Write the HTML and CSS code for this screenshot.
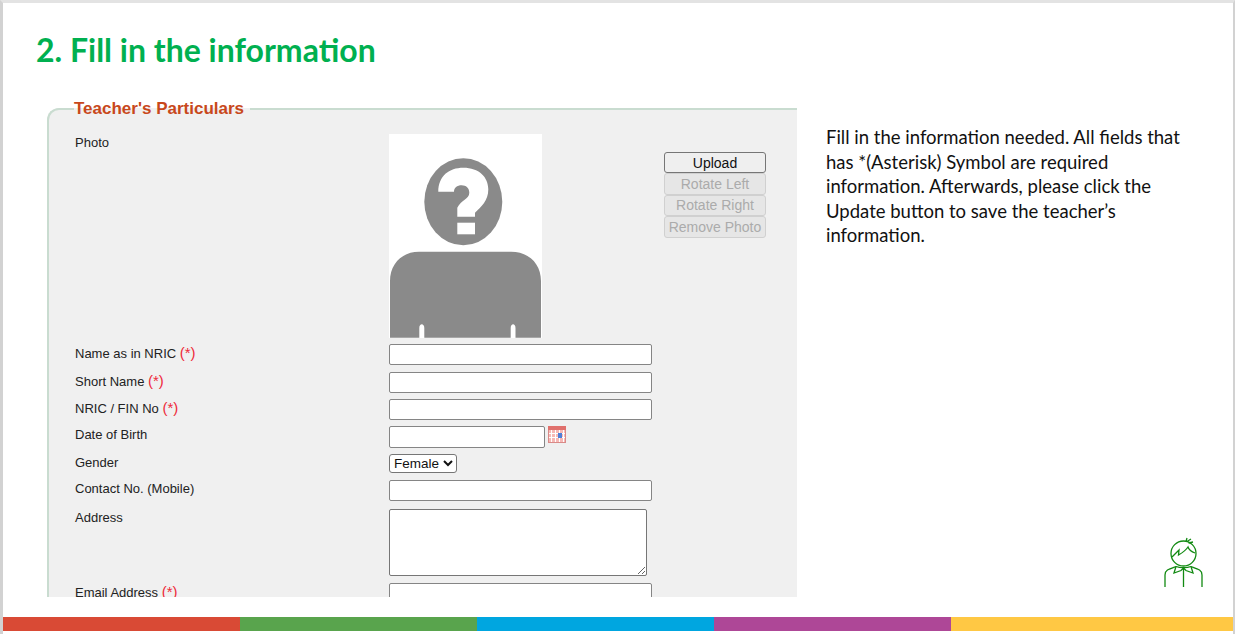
FILE: index.html
```html
<!DOCTYPE html>
<html lang="en">

<head>
  <meta charset="UTF-8">
  <title>2. Fill in the information</title>
  <link rel="stylesheet" href="styles.css">
</head>

<body>
  <div class="slide">
    <h1 class="slide-title">2. Fill in the information</h1>

    <div class="slide-main">
      <!-- Screenshot of the form, cut off at the bottom -->
      <div class="panel">
        <fieldset class="particulars">
          <legend>Teacher's Particulars</legend>
          <form class="form-grid">
            <label>Photo</label>
            <div class="photo-field">
              <svg class="photo" viewBox="0 0 153 204" width="153" height="204">
                <rect width="153" height="204" fill="#fff" />
                <ellipse cx="74.3" cy="67.8" rx="39" ry="43.5" fill="#8a8a8a" />
                <path fill="#fff" d="M49.3 57.7C49.3 42 60 33.7 74.3 33.7C90 33.7 99.3 43 99.3 55.3C99.3 67 92 73 86 78.7V82.7H68.3V73.7C72 66 80.3 65 80.3 58.7C80.3 54 77 51.3 72.7 51.3C68 51.3 65 54 65 57.7Z" />
                <rect x="68.3" y="88.7" width="17.7" height="11.6" fill="#fff" />
                <path fill="#8a8a8a" d="M1 203.7V147C1 130 13 117.7 30 117.7H122C140 117.7 152 130 152 147V203.7H126.500V194C126.500 189 121.700 189 121.700 194V203.700H35.300V194C35.300 189 30.300 189 30.300 194V203.700Z" />
              </svg>
              <div class="photo-buttons">
                <button type="button">Upload</button>
                <button type="button" disabled>Rotate Left</button>
                <button type="button" disabled>Rotate Right</button>
                <button type="button" disabled>Remove Photo</button>
              </div>
            </div>

            <label>Name as in NRIC <span class="req">(*)</span></label>
            <input type="text">

            <label>Short Name <span class="req">(*)</span></label>
            <input type="text">

            <label>NRIC / FIN No <span class="req">(*)</span></label>
            <input type="text">

            <label>Date of Birth</label>
            <div class="date-field">
              <input type="text" class="date-input">
              <svg class="cal-icon" viewBox="0 0 18 17" width="18" height="17">
                <rect x="0.500" y="1.500" width="17" height="15" fill="#f6b9b6" stroke="#d98a88" />
                <rect x="0" y="0" width="18" height="4" fill="#e0706c" />
                <path stroke="#fff" stroke-width="1" d="M3.500 4V16M7.500 4V16M11.500 4V16M15.500 4V16M1 7.500H17M1 11.500H17" />
                <rect x="10" y="7" width="4" height="5" fill="#4f7fd8" />
              </svg>
            </div>

            <label>Gender</label>
            <div><select class="gender">
                <option>Female</option>
                <option>Male</option>
              </select></div>

            <label>Contact No. (Mobile)</label>
            <input type="text">

            <label>Address</label>
            <textarea class="address"></textarea>

            <label>Email Address <span class="req">(*)</span></label>
            <input type="text">
          </form>
        </fieldset>
      </div>

      <div class="side">
        <p class="note">Fill in the information needed. All fields that has *(Asterisk) Symbol are required information. Afterwards, please click the Update button to save the teacher’s information.</p>
        <svg class="mascot" viewBox="0 0 40 50" width="40" height="50" fill="none" stroke="#128a12" stroke-width="1.300">
          <circle cx="19.500" cy="16.500" r="12.500" />
          <path d="M8 20C11 17 13 15 15 13L14.500 18C18 16 22 13 24 10C25 13 28 15 31 16" />
          <path d="M22 4.500L23 1M23 4.500L27 2M24.500 6L29 5" />
          <path d="M1 50V38C1 33 5 32 12 29.500M38 50V38C38 33 34 32 27 29.500" />
          <path d="M12 29.500L10 36L17 33.500L19.500 31L22 33.500L29 36L27 29.500M19.500 31V50M12 29.500C16 31 23 31 27 29.500" />
        </svg>
      </div>
    </div>

    <div class="color-bar">
      <span class="c-red"></span>
      <span class="c-green"></span>
      <span class="c-blue"></span>
      <span class="c-purple"></span>
      <span class="c-yellow"></span>
    </div>
  </div>
</body>

</html>
```

FILE: styles.css
```css
/* General */
* {
  box-sizing: border-box;
}

body {
  margin: 0;
  background-color: #fff;
}

.slide {
  display: flex;
  flex-direction: column;
  height: 634px;
  border-top: 3px solid #e3e3e3;
  border-left: 3px solid #d2d2d2;
  border-right: 2px solid #d2d2d2;
  overflow: hidden;
}

.slide-title {
  margin: 0;
  height: 96px;
  padding: 25px 0 0 33px;
  font-family: "Lato", sans-serif;
  font-size: 32px;
  line-height: 44px;
  font-weight: 700;
  color: #00b050;
}

.slide-main {
  display: flex;
  height: 498px;
}

/* Form panel */
.panel {
  width: 750px;
  height: 498px;
  margin-left: 44px;
  overflow: hidden;
}

.particulars {
  margin: 0;
  padding: 0 0 0 26px;
  width: 770px;
  height: 560px;
  border: 2px solid #c9dcd0;
  border-right: none;
  border-bottom: none;
  border-top-left-radius: 12px;
  background-color: #f0f0f0;
}

.particulars legend {
  padding: 0 6px 0 0;
  margin-left: -1px;
  font-family: "Liberation Sans", Arial, sans-serif;
  font-size: 17px;
  line-height: 20px;
  font-weight: 700;
  color: #c8481b;
}

.form-grid {
  display: grid;
  grid-template-columns: 314px 263px;
  grid-template-rows: 210px 28px 27px 27px 28px 26px 29px 74px 40px;
  margin-top: 15px;
  font-family: "Liberation Sans", Arial, sans-serif;
  font-size: 13px;
  color: #222;
}

.form-grid label {
  line-height: 17px;
}

.req {
  font-size: 15px;
  color: #ee2a3a;
}

.form-grid input {
  display: block;
  width: 263px;
  height: 21px;
  padding: 1px 2px;
  border: 1px solid #858585;
  border-radius: 2px;
  background-color: #fff;
}

.photo-field {
  display: flex;
  align-items: flex-start;
  width: 420px;
}

.photo {
  display: block;
  flex: none;
}

.photo-buttons {
  display: flex;
  flex-direction: column;
  width: 102px;
  margin: 18px 0 0 122px;
}

.photo-buttons button {
  height: 21.400px;
  padding: 0;
  border: 1px solid #767676;
  border-radius: 3px;
  background-color: #efefef;
  font-family: inherit;
  font-size: 14px;
  color: #111;
}

.photo-buttons button:disabled {
  border-color: #d0d0d0;
  background-color: #e6e6e6;
  color: #ababab;
}

.date-field {
  display: flex;
  align-items: flex-start;
}

.form-grid .date-input {
  flex: none;
  width: 156px;
  height: 22px;
}

.cal-icon {
  flex: none;
  margin-left: 3px;
}

.gender {
  display: block;
  width: 68px;
  height: 19px;
  padding: 0;
  border: 1px solid #767676;
  border-radius: 3px;
  background-color: #fff;
  font-family: inherit;
  font-size: 13.500px;
  color: #111;
}

.address {
  display: block;
  width: 258px;
  height: 67px;
  padding: 2px;
  border: 1px solid #767676;
  border-radius: 2px;
  background-color: #fff;
}

/* Right column */
.side {
  display: flex;
  flex-direction: column;
  justify-content: space-between;
  flex: 1;
  padding: 26px 0 10px 29px;
}

.note {
  margin: 0;
  width: 384px;
  font-family: "Lato", sans-serif;
  font-size: 18.500px;
  line-height: 24.600px;
  color: #111;
}

.mascot {
  align-self: flex-end;
  margin-right: 29px;
}

/* Colour strip */
.color-bar {
  display: grid;
  grid-template-columns: 237px 237px 237px 237px 1fr;
  height: 14px;
  margin-top: 20px;
}

.c-red {
  background-color: #d94a35;
}

.c-green {
  background-color: #59a44d;
}

.c-blue {
  background-color: #00a6e0;
}

.c-purple {
  background-color: #ae4797;
}

.c-yellow {
  background-color: #ffc844;
}
```
